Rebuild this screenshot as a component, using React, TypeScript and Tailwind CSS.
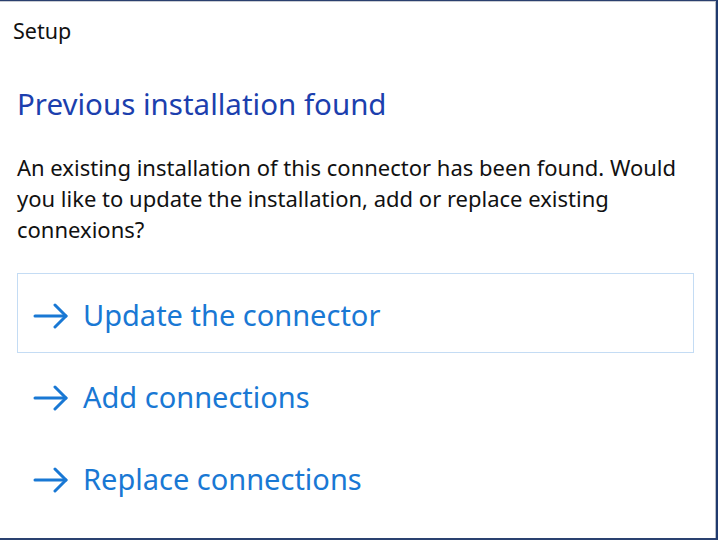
import React from 'react';

const options = ['Update the connector', 'Add connections', 'Replace connections'];

function Arrow() {
  return (
    <svg width="36" height="26" viewBox="0 0 36 26" fill="none" stroke="#1978d4" strokeWidth="3" strokeLinecap="round" strokeLinejoin="round">
      <path d="M2 13h31" />
      <path d="M22 2l11 11-11 11" />
    </svg>
  );
}

export default function App() {
  return (
    <div className="w-[718px] h-[540px] bg-white border-t border-t-[#2a3f6e] border-r-2 border-r-[#1f3a6e] border-b-2 border-b-[#2a4170] font-['Noto_Sans',sans-serif] overflow-hidden">
      <div className="h-full border-t border-t-[#c9ccd3] border-r border-r-[#b9bdc6]">
        <div className="pl-[13px] pt-[16px] text-[21.5px] leading-[26px] text-[#111]">Setup</div>

        <div className="px-[17px]">
          <h1 className="mt-[42px] text-[29.5px] leading-[36px] text-[#1c3fae]">Previous installation found</h1>

          <p className="mt-[30px] text-[22px] leading-[31px] text-[#111] pr-[8px]">
            An existing installation of this connector has been found. Would you like to update the installation, add or replace existing connexions?
          </p>

          <div className="mt-[28px] flex flex-col gap-[2px] w-[677px]">
            {options.map((label, i) => (
              <div
                key={label}
                className={
                  'h-[80px] flex items-center gap-[14px] pl-[15px] pt-[6px] border ' +
                  (i === 0 ? 'border-[#c4dcf4]' : 'border-transparent')
                }
              >
                <Arrow />
                <span className="text-[29px] leading-[36px] text-[#1978d4] pb-[2px]">{label}</span>
              </div>
            ))}
          </div>
        </div>
      </div>
    </div>
  );
}
